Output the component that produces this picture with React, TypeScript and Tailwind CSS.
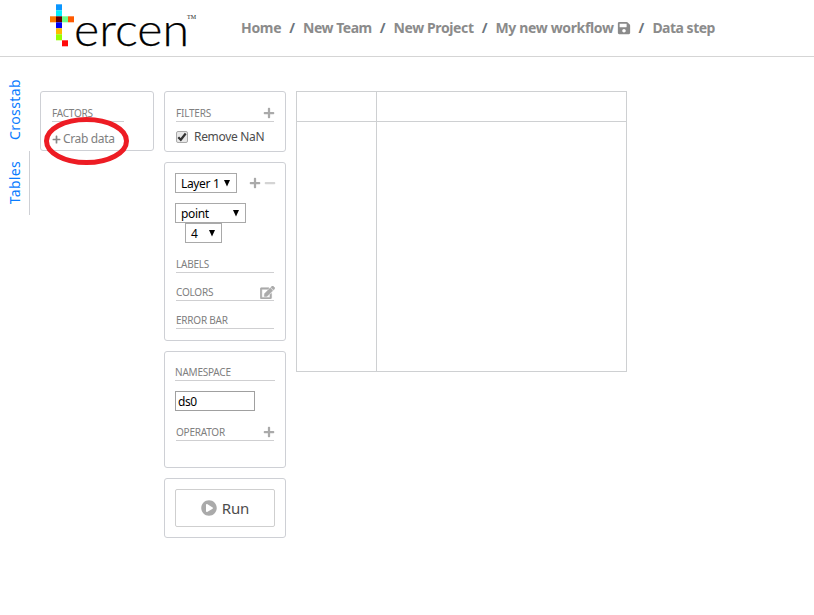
import type { ReactNode } from "react";
import { FaPlus, FaMinus, FaSave, FaEdit, FaPlayCircle } from "react-icons/fa";

function Logo() {
  const cells: [number, number, string][] = [
    [6, 0, "#0a96ff"],
    [6, 6, "#00f0ff"],
    [0, 12, "#ff7a00"],
    [6, 12, "#640000"],
    [12, 12, "#6eff88"],
    [18, 12, "#ff5a00"],
    [6, 18, "#0000f5"],
    [6, 24, "#ffb900"],
    [6, 30, "#96ff00"],
    [12, 36, "#ff0a0a"],
  ];
  return (
    <svg width="150" height="52" viewBox="0 0 150 52" className="block shrink-0 overflow-visible">
      {cells.map(([x, y, c]) => (
        <rect key={`${x}-${y}`} x={x} y={y + 0.3} width="6" height="6" fill={c} />
      ))}
      <text x="24" y="41.6" fontSize="46" textLength="115" lengthAdjust="spacingAndGlyphs" fontFamily="Lato, sans-serif" fontWeight="300" fill="#000" stroke="#000" strokeWidth="0.25">
        ercen
      </text>
      <text x="137" y="14.5" fontSize="6" textLength="9" fontFamily="Liberation Serif, serif" fill="#222">
        TM
      </text>
    </svg>
  );
}

function Panel({ className, children }: { className: string; children: ReactNode }) {
  return <section className={`rounded-[3px] border border-[#ced0d5] ${className}`}>{children}</section>;
}

function Heading({ className = "", label, children }: { className?: string; label: string; children?: ReactNode }) {
  return (
    <div className={`flex h-[15px] items-center justify-between border-b border-[#cfcfd1] pb-0.5 text-[10px] leading-3 text-[#808080] ${className}`}>
      <span className="tracking-[-0.22px]">{label}</span>
      {children}
    </div>
  );
}

function Select({ className, value }: { className: string; value: string }) {
  return (
    <div className={`flex h-5 shrink-0 items-center justify-between border border-[#a9a9a9] pl-[5px] pr-[5px] text-[12px] leading-[18px] text-black ${className}`}>
      <span className="mt-px whitespace-nowrap tracking-[-0.35px]">{value}</span>
      <svg width="8" height="7" viewBox="0 0 8 7" fill="#000">
        <path d="M1 0h6L4 6.5z" />
      </svg>
    </div>
  );
}

function Slash() {
  return <span className="mx-2 text-[#6c757d]">/</span>;
}

export default function App() {
  return (
    <div className="relative h-[615px] w-[814px] overflow-hidden bg-white font-['Noto_Sans','Open_Sans',sans-serif]">
      <header className="flex h-[57px] border-b border-[#d5d5d5] pl-[50px] pt-1">
        <Logo />
        <nav className="ml-[41px] mt-3.5 flex h-5 items-center whitespace-nowrap text-[14px] font-bold leading-5 text-[#8b8b8b]">
          <span className="tracking-[-0.3px]">Home</span>
          <Slash />
          <span className="tracking-[-0.5px]">New Team</span>
          <Slash />
          <span className="tracking-[-0.38px]">New Project</span>
          <Slash />
          <span className="tracking-[-0.35px]">My new workflow</span>
          <FaSave className="ml-[3px] size-[14px]" />
          <Slash />
          <span className="tracking-[-0.5px]">Data step</span>
        </nav>
      </header>

      <main className="flex items-start">
        <aside className="mt-[11px] flex w-[30px] flex-col text-[14px] leading-[30px] text-[#0a7cff]">
          <div className="flex h-[83px] items-center justify-center">
            <span className="rotate-180 tracking-[0.4px] [writing-mode:vertical-rl]">Crosstab</span>
          </div>
          <div className="flex h-16 items-center justify-center border-r border-[#ced0d5]">
            <span className="rotate-180 tracking-[0.3px] [writing-mode:vertical-rl]">Tables</span>
          </div>
        </aside>

        <Panel className="ml-2.5 mt-[34px] h-[60px] w-[114px] px-[11px] pt-[15px]">
          <Heading label="FACTORS" className="w-[72px]" />
          <div className="mt-[7px] flex h-5 items-center gap-0.5 whitespace-nowrap text-[12px] text-[#808080]">
            <FaPlus className="size-[9px] text-[#888]" />
            <span className="tracking-[-0.35px]">Crab data</span>
          </div>
        </Panel>

        <div className="ml-2.5 mt-[34px] flex w-[122px] flex-col gap-2.5">
          <Panel className="h-[61px] px-[11px] pt-[15px]">
            <Heading label="FILTERS">
              <FaPlus className="-mr-px size-3 shrink-0 text-[#aaa]" />
            </Heading>
            <div className="mt-[5px] flex h-5 items-center text-[12px] text-[#4d4d4d]">
              <span className="-mt-px flex size-3 items-center justify-center rounded-[2px] border border-[#aaa] bg-[#e8e8e8]">
                <svg width="10" height="10" viewBox="0 0 10 10" fill="none" stroke="#333" strokeWidth="2.2">
                  <path d="M1.3 5.2 3.8 7.8 8.7 1.5" />
                </svg>
              </span>
              <span className="ml-1.5 whitespace-nowrap tracking-[-0.32px]">Remove NaN</span>
            </div>
          </Panel>

          <Panel className="h-[179px] px-2.5 pt-2.5">
            <div className="flex items-center">
              <Select value="Layer 1" className="w-[62px]" />
              <FaPlus className="ml-3 size-3 shrink-0 text-[#aaa]" />
              <FaMinus className="-mr-1 ml-[3px] size-3 shrink-0 text-[#d4d4d4]" />
            </div>
            <Select value="point" className="mt-2.5 w-[71px]" />
            <Select value="4" className="ml-2.5 w-[37px]" />
            <div className="mx-px mt-[15px] flex flex-col gap-[13px]">
              <Heading label="LABELS" />
              <Heading label="COLORS">
                <FaEdit className="-mr-px h-[13px] w-[15px] shrink-0 stroke-[#aaa] stroke-[20px] text-[#aaa]" />
              </Heading>
              <Heading label="ERROR BAR" />
            </div>
          </Panel>

          <Panel className="h-[117px] px-2.5 pt-3.5">
            <Heading label="NAMESPACE" />
            <div className="mt-2.5 h-5 w-20 border border-[#a0a0a0] pl-0.5 pt-px text-[12px] leading-[18px] tracking-[-0.5px] text-black">ds0</div>
            <Heading label="OPERATOR" className="mx-px mt-[15px] w-[98px]">
              <FaPlus className="-mr-px size-3 shrink-0 text-[#aaa]" />
            </Heading>
          </Panel>

          <Panel className="h-[60px] p-2.5">
            <div className="flex h-[38px] items-center justify-center gap-[5px] rounded-[2px] border border-[#cfcfcf] text-[15px] text-[#4d4d4d]">
              <FaPlayCircle className="size-4 text-[#aaa]" />
              <span className="tracking-[-0.1px]">Run</span>
            </div>
          </Panel>
        </div>

        <div className="ml-2.5 mt-[34px] grid h-[281px] w-[331px] grid-cols-[80px_1fr] grid-rows-[30px_1fr] border border-[#ced0d2]">
          <div className="border-b border-r border-[#ced0d2]" />
          <div className="border-b border-[#ced0d2]" />
          <div className="border-r border-[#ced0d2]" />
          <div />
        </div>
      </main>

      <svg className="absolute left-[43px] top-[115px]" width="88" height="52" viewBox="0 0 88 52" fill="none" stroke="#ed1c24" strokeWidth="5">
        <ellipse cx="43.5" cy="26" rx="40" ry="21.5" />
      </svg>
    </div>
  );
}
